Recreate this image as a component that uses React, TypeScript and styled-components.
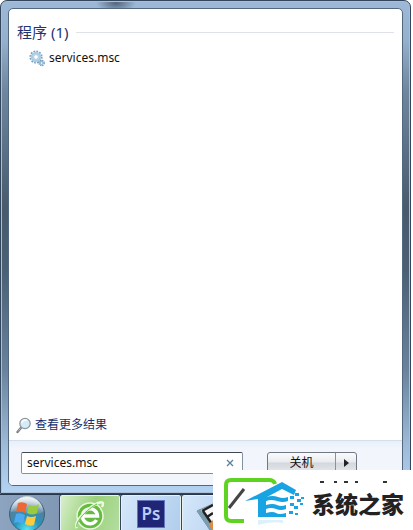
import React, { useState } from 'react';
import styled, { createGlobalStyle } from 'styled-components';

const GlobalStyle = createGlobalStyle`
  * { box-sizing: border-box; }
  body {
    margin: 0;
    background: #fff;
    font-family: "Noto Sans", "Noto Sans CJK SC", sans-serif;
    font-size: 12px;
    line-height: 16px;
    color: #111;
  }
  button, input { font: inherit; color: inherit; margin: 0; }
`;

const Desktop = styled.div`
  position: relative;
  display: flex;
  flex-direction: column;
  min-height: 100vh;
  overflow: hidden;
`;

const StartMenu = styled.main`
  flex: 1;
  display: flex;
  margin-right: 2px;
  padding: 7px;
  border: 1px solid #32465c;
  border-radius: 7px 7px 0 0;
  box-shadow: inset 0 0 0 1px #a9bfd5;
  background:
    radial-gradient(ellipse 20px 10px at 115px 2px, #52647c, transparent),
    linear-gradient(#9db9d7, #95b0cd 8%, #6f879f 18%, #485b6d 42%, #4b6074 55%, #69839d 75%, #9db9d6 90%, #b4d3f2);
`;

const Panel = styled.div`
  flex: 1;
  min-width: 0;
  display: flex;
  flex-direction: column;
  border: 1px solid #52687e;
  border-radius: 5px;
  background: #fff;
  overflow: hidden;
`;

const Results = styled.section`
  flex: 1;
  padding: 13px 8px 0;
`;

const GroupHeading = styled.h2`
  display: flex;
  align-items: center;
  gap: 8px;
  margin: 0;
  font-size: 15px;
  font-weight: 400;
  line-height: 20px;
  color: #1f3471;
  &::after {
    content: "";
    flex: 1;
    border-top: 1px solid #dfe3e8;
  }
`;

const ResultItem = styled.a`
  display: flex;
  align-items: center;
  gap: 4px;
  margin-top: 7px;
  padding-left: 12px;
  color: #111;
  text-decoration: none;
`;

const MoreLink = styled.a`
  display: flex;
  align-items: center;
  gap: 3px;
  padding: 0 7px 5px;
  line-height: 20px;
  color: #14306b;
  text-decoration: none;
`;

const Footer = styled.footer`
  display: flex;
  align-items: flex-start;
  gap: 24px;
  height: 45px;
  padding: 11px 45px 0 12px;
  border-top: 1px solid #d3deec;
  background: linear-gradient(#e8eff9, #f2f6fc 8px);
`;

const SearchBox = styled.div`
  flex: 1;
  display: flex;
  align-items: center;
  height: 22px;
  padding: 0 6px 0 5px;
  border: 1px solid #8292a5;
  border-top-color: #3e4752;
  border-radius: 2px;
  background: #fff;
`;

const SearchInput = styled.input`
  flex: 1;
  min-width: 0;
  padding: 0;
  border: 0;
  outline: 0;
  background: none;
`;

const ClearButton = styled.button`
  display: flex;
  padding: 2px;
  border: 0;
  background: none;
`;

const PowerGroup = styled.div`
  display: flex;
  height: 22px;
  border: 1px solid #6f7883;
  border-radius: 3px;
  background: linear-gradient(#fafbfc, #e9ecef 45%, #d3d8dd 50%, #e6e9ec);
`;

const PowerButton = styled.button<{ $width: number }>`
  display: flex;
  align-items: center;
  justify-content: center;
  width: ${p => p.$width}px;
  padding: 0;
  border: 0;
  background: none;
  & + & { border-left: 1px solid #89919a; }
`;

const Taskbar = styled.nav`
  display: flex;
  height: 36px;
  border-top: 1px solid #26364c;
  background: linear-gradient(90deg, #8da4c1, #8198b4 60px, #b3cce8 130px);
  overflow: hidden;
`;

const StartButton = styled.button`
  display: flex;
  width: 60px;
  padding: 0 0 0 8px;
  border: 0;
  background: none;
`;

const TaskButton = styled.button<{ $tone: 'green' | 'blue' }>`
  display: flex;
  justify-content: center;
  width: 60px;
  height: 40px;
  padding: 4px 0 0;
  border: 1px solid #e6f2f6;
  outline: 1px solid #35465c;
  margin-right: 1px;
  border-radius: 2px;
  background: ${p => p.$tone === 'green'
    ? 'linear-gradient(110deg, #d8efca, #9bd17d 50%, #b4dea0)'
    : 'linear-gradient(110deg, #d5e7fa, #b0cdec)'};
`;

const PsTile = styled.span`
  width: 28px;
  height: 28px;
  border: 1px solid #6375bd;
  background: #202575;
  color: #b9cdfa;
  font-size: 17px;
  font-weight: 600;
  line-height: 25px;
  text-align: center;
`;

const Watermark = styled.aside`
  position: absolute;
  right: 0;
  bottom: 0;
  display: flex;
  align-items: center;
  width: 200px;
  height: 60px;
  background: #fff;
`;

const WatermarkName = styled.div`
  display: flex;
  flex-direction: column;
`;

const WatermarkText = styled.strong`
  color: #222;
  font-family: "Noto Sans CJK SC", sans-serif;
  font-size: 23px;
  font-weight: 900;
  line-height: 32px;
  white-space: nowrap;
`;

const GearsIcon = () => (
  <svg width="16" height="18" viewBox="0 0 16 18" fill="none" aria-hidden="true">
    <circle cx="7" cy="8" r="5.6" stroke="#7b9fbd" strokeWidth="2" strokeDasharray="1.7 1.2" />
    <circle cx="7" cy="8" r="4" stroke="#a9cde6" strokeWidth="2.4" />
    <circle cx="7" cy="8" r="2.4" fill="#fff" stroke="#7fa3c0" strokeWidth=".6" />
    <circle cx="12.6" cy="14" r="2.5" stroke="#6f95b5" strokeWidth="1.5" strokeDasharray="1.2 .8" />
    <circle cx="12.6" cy="14" r="1.5" fill="#fff" stroke="#91bad8" strokeWidth="1.3" />
  </svg>
);

const MagnifierIcon = () => (
  <svg width="16" height="17" viewBox="0 0 16 17" fill="none" aria-hidden="true">
    <path d="M5.2 10.5 1.5 15" stroke="#75797e" strokeWidth="2.3" strokeLinecap="round" />
    <path d="M5.2 10.5 1.8 14.5" stroke="#c0c4c8" strokeWidth=".8" />
    <circle cx="9" cy="6.5" r="5.2" fill="#d4ebf8" stroke="#8b969f" strokeWidth="1.2" />
    <path d="M5.7 6a3.6 3.6 0 0 1 5.2-2.7" stroke="#fff" strokeWidth="1.5" />
  </svg>
);

const StartOrb = () => (
  <svg width="38" height="38" viewBox="0 0 38 38" aria-hidden="true">
    <defs>
      <radialGradient id="orb" cx=".5" cy=".95" r=".9">
        <stop offset="0" stopColor="#57e5f5" />
        <stop offset=".4" stopColor="#2695bd" />
        <stop offset=".75" stopColor="#557f9d" />
        <stop offset="1" stopColor="#c9d8e1" />
      </radialGradient>
      <linearGradient id="gloss" x1="0" y1="0" x2="0" y2="1">
        <stop offset="0" stopColor="#fff" stopOpacity=".75" />
        <stop offset="1" stopColor="#fff" stopOpacity=".1" />
      </linearGradient>
    </defs>
    <circle cx="19" cy="19" r="17.5" fill="url(#orb)" stroke="#3e607a" />
    <path d="M3 17a16 16 0 0 1 32 0q-8 4-16 1T3 17Z" fill="url(#gloss)" />
    <path d="M10 8q5-2 9 1l-2 9q-4-3-9-1Z" fill="#ed6832" />
    <path d="M21 10q5 3 10-1l-2 9q-5 3-10 0Z" fill="#9aca3d" />
    <path d="M8 19q4-2 9 1l-2 9q-4-3-9-1Z" fill="#4daaf0" />
    <path d="M19 21q4 2 9 0l-2 9q-4 2-9-1Z" fill="#fccb3d" />
  </svg>
);

const BrowserIcon = () => (
  <svg width="32" height="32" viewBox="0 0 32 32" fill="none" aria-hidden="true">
    <circle cx="16" cy="16" r="13" fill="#63bb40" stroke="#e9f8dc" strokeWidth="1.5" />
    <path d="M22.5 20a7.5 7.5 0 1 1 1-4H10" stroke="#fff" strokeWidth="3.5" />
    <path d="M3 28C-1 22 13 8 24 3c5-2 6 0 4 4" stroke="#e9fadd" strokeWidth="2.5" />
    <path d="M3 27C1 22 13 9 23 4" stroke="#63bd40" strokeWidth="1" />
  </svg>
);

const FilmIcon = () => (
  <svg width="38" height="36" viewBox="0 0 38 36" aria-hidden="true">
    <path d="m4 11 18-8 13 18-16 12Z" fill="#f4f6f8" stroke="#6b8798" />
    <path d="m4 11 3-2 15 20-3 4Z" fill="#7a9caf" />
    <path d="m9 11 11-6M10 11l9 13M14 17l6-4" fill="none" stroke="#222" strokeWidth="2.5" />
    <path d="m16 24 8-8 8 8-12 9Z" fill="#dc8b45" />
  </svg>
);

const HouseLogo = () => (
  <svg width="99" height="60" viewBox="0 0 99 60" fill="none" aria-hidden="true">
    <path d="M31 51H18q-5 0-5-5V15q0-5 5-5h38q5 0 6 4" stroke="#5ed321" strokeWidth="4" />
    <path d="M16 38 31 19" stroke="#454545" strokeWidth="3" />
    <g fill="#18a4e2">
      <path d="M32 31 69 12l14 8-2 5-12-6-15 8v4h-9v-2Z" />
      <path d="M45 29h8v18h-8Z" />
      <path d="M53 27q7-2 12 0t10 0v4q-5 2-11 0t-11 0Z" />
      <path d="M53 35q7-2 11 0t9 0v4q-5 2-10 0t-10 0Z" />
      <path d="M53 43q7-2 10 0t10 0v4H53Z" />
      <path d="M77 26h4v3h-4ZM82 23h4v3h-4ZM84 29h4v3h-4ZM77 33h4v3h-4ZM81 36h4v3h-4ZM76 41h4v3h-4ZM88 27h3v2h-3ZM87 33h3v2h-3ZM82 43h3v2h-3Z" />
    </g>
    <path d="M45 50h25v3q-12-2-25 2Z" fill="#18a4e2" opacity=".15" />
  </svg>
);

export default function App() {
  const [query, setQuery] = useState('services.msc');
  return (
    <>
      <GlobalStyle />
      <Desktop>
        <StartMenu>
          <Panel>
            <Results>
              <GroupHeading>程序 (1)</GroupHeading>
              <ResultItem href="#services"><GearsIcon />services.msc</ResultItem>
            </Results>
            <MoreLink href="#more"><MagnifierIcon />查看更多结果</MoreLink>
            <Footer>
              <SearchBox>
                <SearchInput aria-label="搜索" value={query} onChange={e => setQuery(e.target.value)} />
                <ClearButton aria-label="清除" onClick={() => setQuery('')}>
                  <svg width="8" height="8" viewBox="0 0 8 8" stroke="#5c7f9b" strokeWidth="1.3"><path d="m1 1 6 6M7 1 1 7" /></svg>
                </ClearButton>
              </SearchBox>
              <PowerGroup>
                <PowerButton $width={67}>关机</PowerButton>
                <PowerButton $width={21} aria-label="关机选项">
                  <svg width="5" height="8" viewBox="0 0 5 8"><path d="m0 0 5 4-5 4Z" fill="#222" /></svg>
                </PowerButton>
              </PowerGroup>
            </Footer>
          </Panel>
        </StartMenu>
        <Taskbar>
          <StartButton aria-label="开始"><StartOrb /></StartButton>
          <TaskButton $tone="green" aria-label="浏览器"><BrowserIcon /></TaskButton>
          <TaskButton $tone="blue"><PsTile>Ps</PsTile></TaskButton>
          <TaskButton $tone="blue" aria-label="视频"><FilmIcon /></TaskButton>
        </Taskbar>
        <Watermark>
          <HouseLogo />
          <WatermarkName>
            <svg width="92" height="6" viewBox="0 0 92 6" aria-hidden="true">
              <path d="M8 0h4v2H8ZM22 0h3v2h-3ZM32 0h4v2h-4ZM43 0h3v2h-3ZM71 0h4v2h-4Z" fill="#333" />
            </svg>
            <WatermarkText>系统之家</WatermarkText>
          </WatermarkName>
        </Watermark>
      </Desktop>
    </>
  );
}
